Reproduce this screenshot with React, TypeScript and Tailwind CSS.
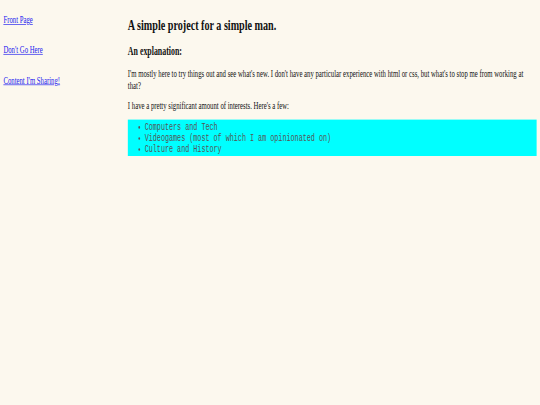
const interests = [
  "Computers and Tech",
  "Videogames (most of which I am opinionated on)",
  "Culture and History",
];

const links = ["Front Page", "Don't Go Here", "Content I'm Sharing!"];

export default function App() {
  return (
    <div className="h-[405px] w-[540px] overflow-hidden bg-[#fcf8ee]">
      {/* page is laid out at 1280x623 and shrunk to fit the capture */}
      <div className="flex h-[623px] w-[1280px] origin-top-left scale-x-[0.421875] scale-y-[0.65] p-2 font-['Liberation_Serif',serif] text-[16px] leading-[1.15] text-[#111]">
        <nav className="flex w-[295px] shrink-0 flex-col gap-[28.5px] pt-[13.5px]">
          {links.map((l) => (
            <a key={l} href="#" className="text-[#1a1aee] underline">
              {l}
            </a>
          ))}
        </nav>

        <main className="flex-1">
          <h1 className="mt-[16.5px] mb-[15.5px] text-[24px] font-bold">
            A simple project for a simple man.
          </h1>
          <h3 className="mb-[15.5px] text-[18.72px] font-bold">An explanation:</h3>
          <p className="mb-[12.5px]">
            I'm mostly here to try things out and see what's new. I don't have
            any particular experience with html or css, but what's to stop me
            from working at that?
          </p>
          <p className="mb-[12px]">
            I have a pretty significant amount of interests. Here's a few:
          </p>
          <ul className="list-disc bg-[#00ffff] pt-[4px] pb-[1px] pl-10 font-['Liberation_Mono',monospace] text-[16px] leading-[17px] text-[#555]">
            {interests.map((i) => (
              <li key={i}>{i}</li>
            ))}
          </ul>
        </main>
      </div>
    </div>
  );
}
